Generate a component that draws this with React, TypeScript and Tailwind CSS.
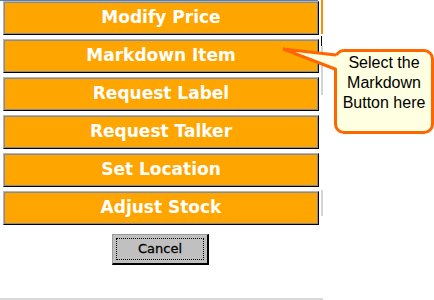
const items = [
    "Modify Price",
    "Markdown Item",
    "Request Label",
    "Request Talker",
    "Set Location",
    "Adjust Stock",
];

function MenuButton({ label }: { label: string }) {
    return (
        <div className="h-[34px] w-[316px] flex border border-t-[#b4b4b4] border-l-[#b4b4b4] border-r-black border-b-black">
            <div className="flex-1 flex items-center justify-center border border-[#8a8a8a] bg-[#ffa500]">
                <span className="text-white font-bold text-[17px] font-['DejaVu_Sans',Verdana,sans-serif]">
                    {label}
                </span>
            </div>
        </div>
    );
}

export default function App() {
    return (
        <div className="relative w-[434px] h-[300px] bg-white overflow-hidden">
            <div className="flex">
                {/* Button column */}
                <div className="flex flex-col w-[319px]">
                    <div className="h-px w-[318px] bg-[#5b7fae]" />
                    <div className="flex flex-col gap-1 pl-[3px]">
                        {items.map((item) => (
                            <MenuButton key={item} label={item} />
                        ))}
                    </div>
                </div>

                {/* Leftover scroll strip */}
                <div className="ml-[2px] w-[2px] flex flex-col items-start">
                    <div className="h-[34px] w-[2px] bg-[#ff8c00]" />
                    <div className="h-[2px]" />
                    <div className="h-[10px] w-px bg-black" />
                    <div className="h-[49px] w-[2px] bg-[#d4d4d4]" />
                    <div className="h-[95px]" />
                    <div className="h-[26px] w-[2px] bg-[#d4d4d4]" />
                </div>
            </div>

            {/* Cancel */}
            <div className="mt-[9px] ml-[112px] w-[97px] h-[31px] flex border border-t-[#9a9a9a] border-l-[#9a9a9a] border-r-black border-b-black border-b-2 border-r-2">
                <div className="flex-1 bg-[#c0c0c0] p-[3px] flex">
                    <div className="flex-1 flex items-center justify-center border border-dotted border-black">
                        <span className="text-[13px] text-black font-['DejaVu_Sans',Verdana,sans-serif] [-webkit-text-stroke:0.3px_black]">
                            Cancel
                        </span>
                    </div>
                </div>
            </div>

            <div className="mt-[33px] h-[2px] w-[323px] bg-[#d8d8d8]" />

            {/* Callout */}
            <div className="absolute left-[334px] top-[49px] w-[100px] h-[85px] border-[3px] border-[#ff6600] rounded-[10px] bg-[#ffffe1] pt-px text-center text-[16px] leading-[20px] text-black font-['Liberation_Sans',Arial,sans-serif]">
                <div>Select the</div>
                <div>Markdown</div>
                <div>Button here</div>
            </div>
            <svg
                className="absolute inset-0 pointer-events-none"
                width="434"
                height="300"
                viewBox="0 0 434 300"
            >
                <path
                    d="M340 56 L283 49 L339 69 Z"
                    fill="#ffffe1"
                    stroke="none"
                />
                <path
                    d="M336 55 L283 49 L335 69"
                    fill="none"
                    stroke="#ff6600"
                    strokeWidth="3"
                    strokeLinejoin="miter"
                />
            </svg>
        </div>
    );
}
